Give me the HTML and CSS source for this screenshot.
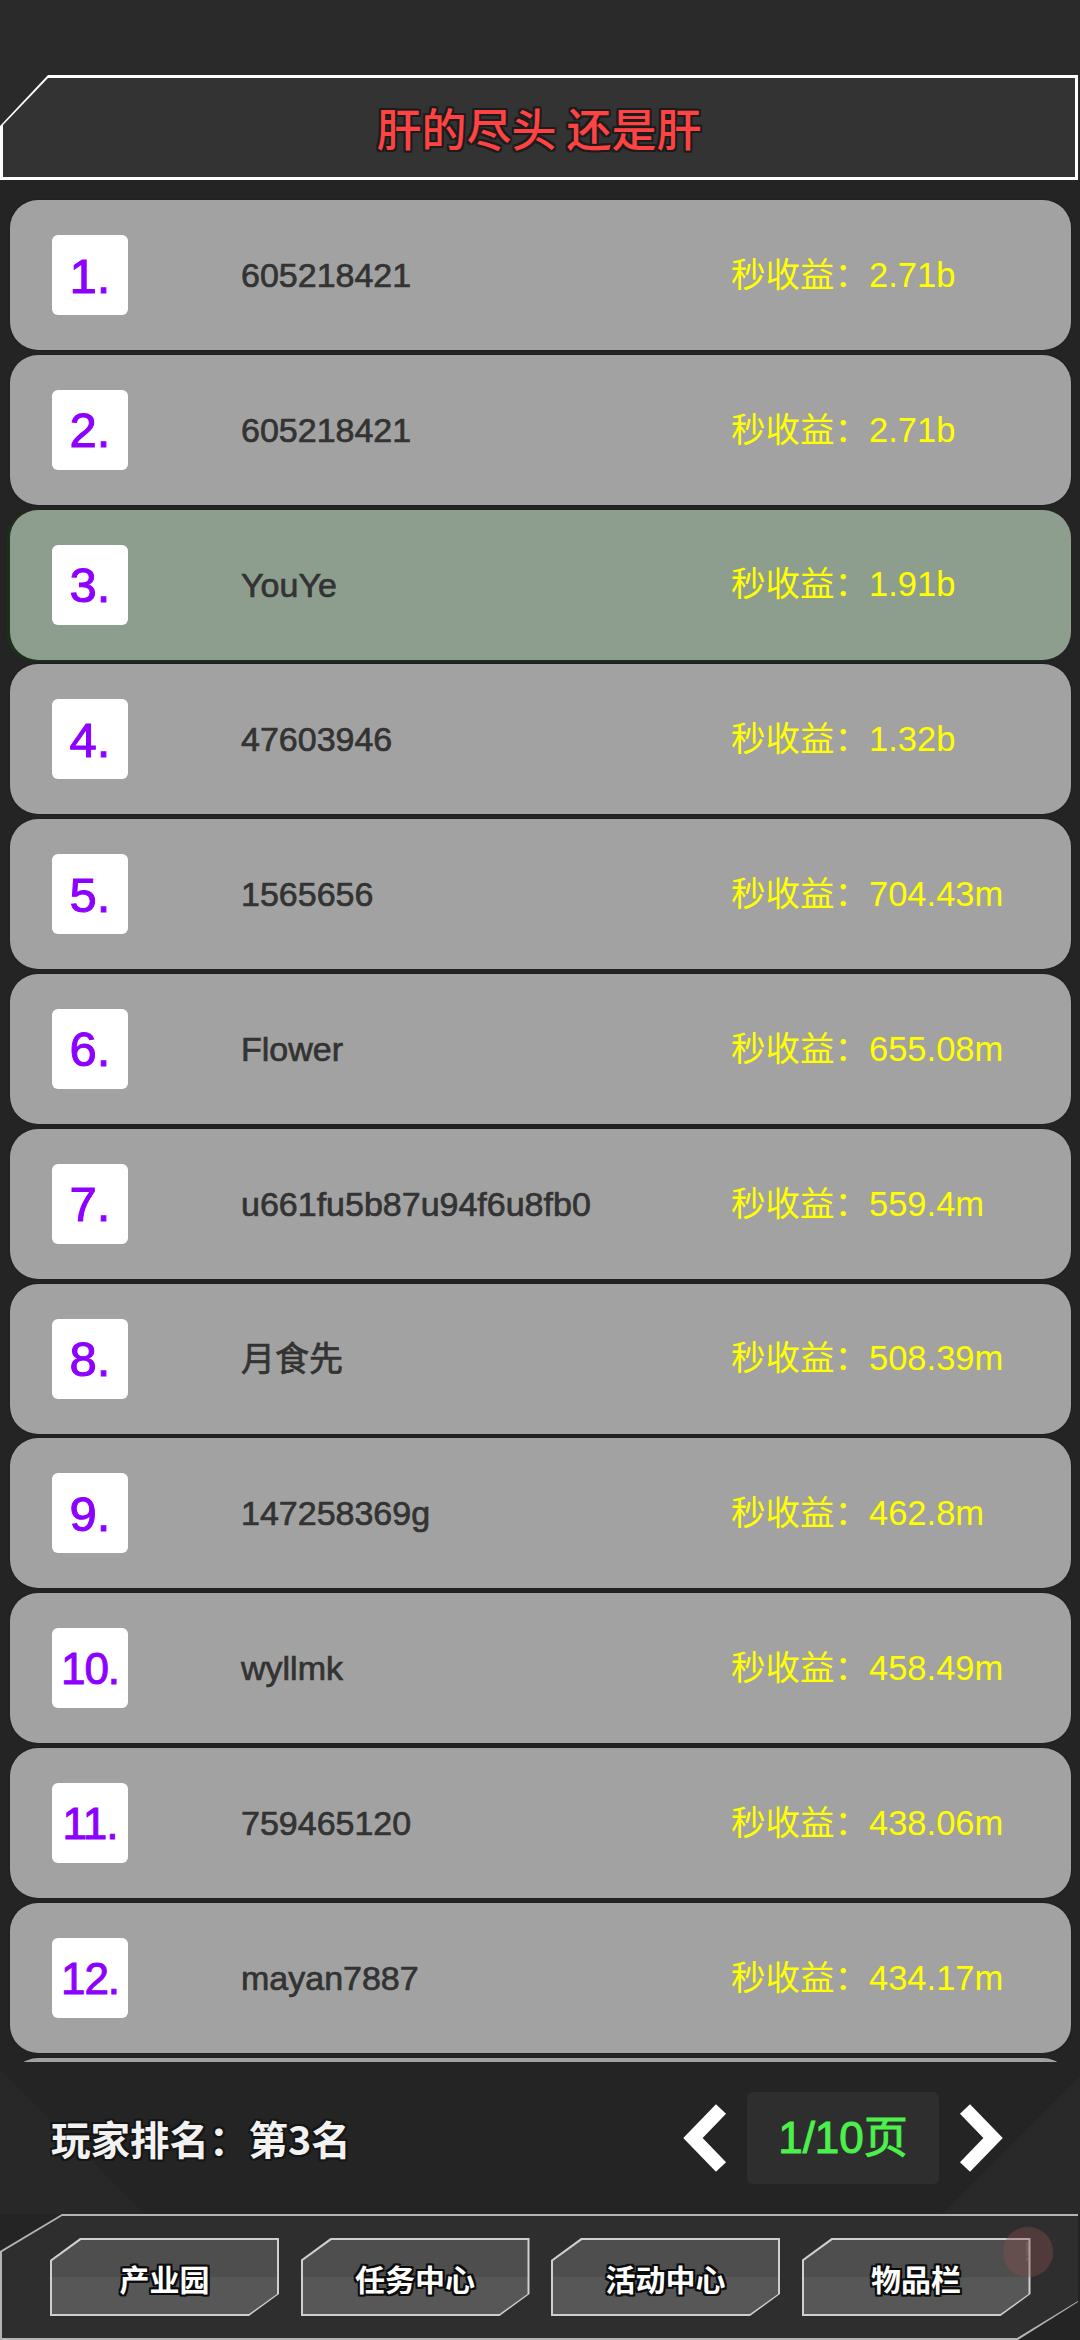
FILE: index.html
```html
<!DOCTYPE html>
<html lang="zh-CN">
<head>
<meta charset="utf-8">
<title>排行榜</title>
<link rel="stylesheet" href="styles.css">
</head>
<body>
<div class="app">
  <div class="statusbar"></div>

  <header class="titlebar">
    <div class="title-frame">
      <div class="title-inner"><h1 class="title">肝的尽头 还是肝</h1></div>
    </div>
  </header>

  <main class="list">
    <div class="card"><div class="rank-cell"><span class="rank">1.</span></div><div class="name">605218421</div><div class="income">秒收益：2.71b</div></div>
    <div class="card"><div class="rank-cell"><span class="rank">2.</span></div><div class="name">605218421</div><div class="income">秒收益：2.71b</div></div>
    <div class="card card-me"><div class="rank-cell"><span class="rank">3.</span></div><div class="name">YouYe</div><div class="income">秒收益：1.91b</div></div>
    <div class="card"><div class="rank-cell"><span class="rank">4.</span></div><div class="name">47603946</div><div class="income">秒收益：1.32b</div></div>
    <div class="card"><div class="rank-cell"><span class="rank">5.</span></div><div class="name">1565656</div><div class="income">秒收益：704.43m</div></div>
    <div class="card"><div class="rank-cell"><span class="rank">6.</span></div><div class="name">Flower</div><div class="income">秒收益：655.08m</div></div>
    <div class="card"><div class="rank-cell"><span class="rank">7.</span></div><div class="name">u661fu5b87u94f6u8fb0</div><div class="income">秒收益：559.4m</div></div>
    <div class="card"><div class="rank-cell"><span class="rank">8.</span></div><div class="name">月食先</div><div class="income">秒收益：508.39m</div></div>
    <div class="card"><div class="rank-cell"><span class="rank">9.</span></div><div class="name">147258369g</div><div class="income">秒收益：462.8m</div></div>
    <div class="card"><div class="rank-cell"><span class="rank rank-2d">10.</span></div><div class="name">wyllmk</div><div class="income">秒收益：458.49m</div></div>
    <div class="card"><div class="rank-cell"><span class="rank rank-2d">11.</span></div><div class="name">759465120</div><div class="income">秒收益：438.06m</div></div>
    <div class="card"><div class="rank-cell"><span class="rank rank-2d">12.</span></div><div class="name">mayan7887</div><div class="income">秒收益：434.17m</div></div>
    <div class="card" aria-hidden="true"></div>
  </main>

  <section class="footer-bar">
    <div class="my-rank">玩家排名：第3名</div>
    <div class="pager">
      <svg class="chev" viewBox="0 0 45 70" width="45" height="70"><polyline points="38,6 10,35 38,64" fill="none" stroke="#fff" stroke-width="14" stroke-linejoin="miter" stroke-miterlimit="10"/></svg>
      <div class="page-box">1/10页</div>
      <svg class="chev" viewBox="0 0 45 70" width="45" height="70"><polyline points="7,6 35,35 7,64" fill="none" stroke="#fff" stroke-width="14" stroke-linejoin="miter" stroke-miterlimit="10"/></svg>
    </div>
  </section>

  <nav class="bottom-nav">
    <div class="nav-inner">
      <div class="nav-btn"><div class="nav-btn-fill"><span>产业园</span></div></div>
      <div class="nav-btn"><div class="nav-btn-fill"><span>任务中心</span></div></div>
      <div class="nav-btn"><div class="nav-btn-fill"><span>活动中心</span></div></div>
      <div class="nav-btn"><div class="nav-btn-fill"><span>物品栏</span></div></div>
    </div>
    <div class="float-dot"><span>!</span></div>
  </nav>
</div>
</body>
</html>
```

FILE: styles.css
```css
* { box-sizing: border-box; }

html, body {
  margin: 0;
  padding: 0;
  background: #242424;
}

body {
  width: 1080px;
  height: 2340px;
  overflow: hidden;
  font-family: "Liberation Sans", "Noto Sans CJK SC", sans-serif;
}

.app {
  width: 1080px;
  height: 2340px;
  display: flex;
  flex-direction: column;
  background: #242424;
}

.statusbar {
  height: 75px;
  flex: none;
  background: #2a2a2a;
}

/* ---------- title ---------- */
.titlebar {
  height: 105px;
  flex: none;
  background: #2a2a2a;
  padding-right: 2px;
}

.title-frame {
  height: 105px;
  background: #ffffff;
  padding: 3px;
  clip-path: polygon(48px 0, 100% 0, 100% 100%, 0 100%, 0 51px);
}

.title-inner {
  height: 99px;
  background: #333333;
  clip-path: polygon(45px 0, 100% 0, 100% 100%, 0 100%, 0 47px);
  display: flex;
  align-items: center;
  justify-content: center;
}

.title {
  margin: 0;
  font-family: "Noto Sans CJK SC", sans-serif;
  font-weight: 500;
  font-size: 45px;
  line-height: 1;
  color: #ff4343;
  text-shadow:
    -2px -2px 0 #1c1c1c, 2px -2px 0 #1c1c1c, -2px 2px 0 #1c1c1c, 2px 2px 0 #1c1c1c,
    0 -2px 0 #1c1c1c, 0 2px 0 #1c1c1c, -2px 0 0 #1c1c1c, 2px 0 0 #1c1c1c;
}

/* ---------- list ---------- */
.list {
  height: 1882px;
  flex: none;
  overflow: hidden;
  padding: 20px 9px 0 10px;
  display: flex;
  flex-direction: column;
  gap: 4.8px;
}

.card {
  flex: none;
  height: 150px;
  background: #a2a2a2;
  border-radius: 28px;
  box-shadow: 0 0 2px rgba(0, 0, 0, 0.35);
  display: grid;
  grid-template-columns: 189px 490px 1fr;
  align-items: center;
  padding-left: 42px;
}

.card-me {
  background: #8e9e8e;
  box-shadow: -3px 1px 3px rgba(24, 56, 24, 0.85);
}

.rank-cell {
  display: flex;
  align-items: center;
}

.rank {
  width: 76px;
  height: 80px;
  background: #ffffff;
  border-radius: 6px;
  display: flex;
  align-items: center;
  justify-content: center;
  color: #8d00ff;
  font-family: "Liberation Sans", sans-serif;
  font-size: 49px;
  line-height: 1;
  padding-top: 2px;
  -webkit-text-stroke: 1px #8d00ff;
}

.rank-2d {
  font-size: 44px;
  letter-spacing: -1px;
}

.name {
  font-size: 34px;
  color: #333333;
  white-space: nowrap;
  line-height: 1;
  -webkit-text-stroke: 0.7px #333333;
}

.income {
  font-size: 34.5px;
  color: #ffff00;
  white-space: nowrap;
  line-height: 1;
}

/* ---------- footer bar ---------- */
.footer-bar {
  height: 152px;
  flex: none;
  display: flex;
  align-items: center;
  justify-content: space-between;
  padding: 0 77px 0 51px;
  background:
    linear-gradient(45deg, #282828 102px, transparent 102px),
    linear-gradient(-45deg, #292929 97px, transparent 97px),
    #242424;
}

.my-rank {
  font-family: "Noto Sans CJK SC", sans-serif;
  font-weight: 700;
  font-size: 39.5px;
  line-height: 1;
  color: #f2f2f2;
  text-shadow:
    -2px -2px 0 #161616, 2px -2px 0 #161616, -2px 2px 0 #161616, 2px 2px 0 #161616,
    0 -2px 0 #161616, 0 2px 0 #161616, -2px 0 0 #161616, 2px 0 0 #161616;
}

.pager {
  display: flex;
  align-items: center;
  gap: 19px;
}

.chev {
  display: block;
}

.page-box {
  width: 192px;
  height: 92px;
  background: #2e2e2e;
  border-radius: 6px;
  display: flex;
  align-items: center;
  justify-content: center;
  color: #4cf04c;
  font-family: "Liberation Sans", "Noto Sans CJK SC", sans-serif;
  font-size: 44px;
  line-height: 1;
  -webkit-text-stroke: 1px #4cf04c;
}

/* ---------- bottom nav ---------- */
.bottom-nav {
  position: relative;
  height: 126px;
  flex: none;
  background: #b4b4b4;
  clip-path: polygon(62px 0, 1078px 0, 1078px 88px, 1018px 126px, 0 126px, 0 37px);
}

.nav-inner {
  position: absolute;
  inset: 2px 2px 2px 2px;
  background: #2e2e2e;
  clip-path: polygon(60px 0, 100% 0, 100% 85px, 1015px 100%, 0 100%, 0 36px);
  display: flex;
  align-items: center;
  gap: 21.5px;
  padding-left: 48px;
}

.nav-btn {
  width: 229px;
  height: 78px;
  flex: none;
  background: #cfcfcf;
  padding: 2px;
  clip-path: polygon(30px 0, 100% 0, 100% 56px, 199px 100%, 0 100%, 0 22px);
}

.nav-btn-fill {
  height: 100%;
  background: linear-gradient(#4e4e4e 0 50%, #575757 50% 100%);
  clip-path: polygon(29px 0, 100% 0, 100% 54px, 197px 100%, 0 100%, 0 21px);
  display: flex;
  align-items: center;
  justify-content: center;
}

.nav-btn-fill span {
  font-family: "Noto Sans CJK SC", sans-serif;
  font-weight: 700;
  font-size: 30px;
  line-height: 1;
  color: #ffffff;
  padding-top: 2px;
  text-shadow:
    -2px -2px 0 #0c0c0c, 2px -2px 0 #0c0c0c, -2px 2px 0 #0c0c0c, 2px 2px 0 #0c0c0c,
    0 -2px 0 #0c0c0c, 0 2px 0 #0c0c0c, -2px 0 0 #0c0c0c, 2px 0 0 #0c0c0c;
}

.float-dot {
  position: absolute;
  left: 1003px;
  top: 13px;
  width: 50px;
  height: 50px;
  border-radius: 50%;
  background: rgba(140, 80, 80, 0.38);
  box-shadow: 0 0 2px rgba(140, 80, 80, 0.3);
  display: flex;
  align-items: center;
  justify-content: center;
}

.float-dot span {
  font-family: "Liberation Sans", sans-serif;
  font-size: 28px;
  font-weight: 700;
  color: rgba(160, 160, 160, 0.2);
  line-height: 1;
}
```
